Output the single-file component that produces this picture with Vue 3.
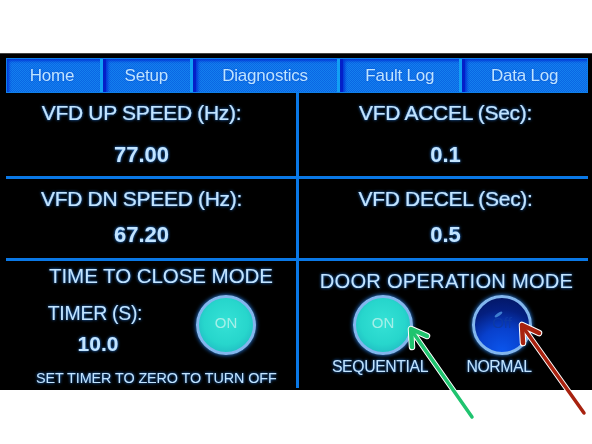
<script setup>
const tabs = [
  { label: 'Home', width: 96 },
  { label: 'Setup', width: 90 },
  { label: 'Diagnostics', width: 148 },
  { label: 'Fault Log', width: 122 },
  { label: 'Data Log', width: 125 }
]

const readings = [
  { label: 'VFD UP SPEED (Hz):', value: '77.00' },
  { label: 'VFD ACCEL (Sec):', value: '0.1' },
  { label: 'VFD DN SPEED (Hz):', value: '67.20' },
  { label: 'VFD DECEL (Sec):', value: '0.5' }
]

const arrows = [
  { color: '#1fc46f', line: '472,417 412,331', head: '427,336 411,329 412,347' },
  { color: '#a8220f', line: '584,413 523,327', head: '539,333 522,325 523,343' }
]
</script>

<template>
  <div class="page">
    <div class="screen">
      <nav class="tabs">
        <div v-for="tab in tabs" :key="tab.label" class="tab" :style="{ width: tab.width + 'px' }">
          {{ tab.label }}
        </div>
      </nav>

      <section class="readings">
        <div v-for="r in readings" :key="r.label" class="reading">
          <div class="reading-label">{{ r.label }}</div>
          <div class="reading-value">{{ r.value }}</div>
        </div>
      </section>

      <section class="modes">
        <div class="mode mode-time">
          <h2>TIME TO CLOSE MODE</h2>
          <div class="timer-row">
            <div class="timer">
              <div class="timer-label">TIMER (S):</div>
              <div class="timer-value">10.0</div>
            </div>
            <div class="lamp on">ON</div>
          </div>
          <p class="hint">SET TIMER TO ZERO TO TURN OFF</p>
        </div>

        <div class="mode mode-door">
          <h2>DOOR OPERATION MODE</h2>
          <div class="door-row">
            <div class="door-option">
              <div class="lamp on">ON</div>
              <span>SEQUENTIAL</span>
            </div>
            <div class="door-option">
              <div class="lamp off"><i class="glint"></i>Off</div>
              <span>NORMAL</span>
            </div>
          </div>
        </div>
      </section>
    </div>

    <svg class="arrows" width="592" height="444" viewBox="0 0 592 444">
      <g v-for="a in arrows" :key="a.color" fill="none" stroke-linecap="round" stroke-linejoin="round">
        <polyline :points="a.line" stroke="#fff" stroke-width="5.5" />
        <polyline :points="a.head" stroke="#fff" stroke-width="6.5" />
        <polyline :points="a.line" :stroke="a.color" stroke-width="3.5" />
        <polyline :points="a.head" :stroke="a.color" stroke-width="4.5" />
      </g>
    </svg>
  </div>
</template>

<style scoped>
.page {
  position: relative;
  width: 592px;
  height: 444px;
  padding-top: 53px;
  box-sizing: border-box;
  background: #fff;
  overflow: hidden;
  font-family: "Liberation Sans", Arial, sans-serif;
  color: #c2e4ff;
}

.screen {
  height: 337px;
  background: #000;
  border-top: 1px solid #444;
  box-sizing: border-box;
  padding: 4px 4px 0 6px;
  display: flex;
  flex-direction: column;
  filter: blur(0.4px);
}

.tabs {
  display: flex;
  height: 35px;
  flex: none;
  border: 1px solid #0f7fe8;
  box-sizing: border-box;
  background: #0a6cf0;
}

.tab {
  display: flex;
  align-items: center;
  justify-content: center;
  box-sizing: border-box;
  padding-right: 3px;
  border-right: 3px solid #12a0f5;
  border-left: 3px solid #0420c8;
  background: repeating-conic-gradient(#0a66e4 0 25%, #1480ee 0 50%) 0 0 / 2px 2px;
  box-shadow: inset 0 4px 3px -2px #0438d8, inset 4px 0 3px -2px #0438d8;
  color: #bde4ff;
  font-size: 17px;
  letter-spacing: -0.2px;
  text-shadow: 0 0 2px #0a4ad0;
}

.tab:first-child {
  border-left: 0;
}

.tab:last-child {
  border-right: 0;
}

.readings {
  display: grid;
  grid-template-columns: 293px 1fr;
  flex: none;
}

.reading {
  height: 86px;
  box-sizing: border-box;
  border-bottom: 3px solid #0a78e6;
  text-align: center;
  text-shadow: 0 0 3px #2a8cff;
}

.reading:nth-child(odd) {
  border-right: 3px solid #0a78e6;
  padding-right: 19px;
}

.reading:nth-child(even) {
  padding-left: 4px;
}

.reading:nth-child(3),
.reading:nth-child(4) {
  height: 82px;
}

.reading-label {
  font-size: 21px;
  -webkit-text-stroke: 0.2px #c2e4ff;
  padding-top: 8px;
  line-height: 24px;
  letter-spacing: -0.3px;
}

.reading-value {
  font-size: 22px;
  font-weight: 700;
  margin-top: 19px;
  line-height: 22px;
}

.reading:nth-child(n + 3) .reading-value {
  margin-top: 13px;
}

.modes {
  display: grid;
  grid-template-columns: 293px 1fr;
  flex: 1;
  min-height: 0;
}

.mode {
  box-sizing: border-box;
  text-shadow: 0 0 3px #2a8cff;
}

.mode-time {
  border-right: 3px solid #0a78e6;
  margin-bottom: 2px;
}

h2 {
  margin: 0;
  font-size: 20.6px;
  font-weight: 400;
  line-height: 24px;
  text-align: center;
  padding-top: 3px;
}

.mode-time h2 {
  padding-left: 20px;
  letter-spacing: -0.1px;
}

.mode-door h2 {
  padding-top: 8px;
  padding-left: 6px;
  font-size: 20.2px;
  letter-spacing: 0.2px;
}

.timer-row {
  display: flex;
  align-items: flex-start;
  padding-left: 40px;
  gap: 52px;
  height: 81px;
}

.timer {
  padding-top: 13px;
  width: 98px;
  text-align: center;
}

.timer-label {
  font-size: 19.5px;
  line-height: 24px;
  letter-spacing: -0.3px;
}

.timer-value {
  font-size: 21px;
  font-weight: 700;
  line-height: 22px;
  margin-top: 8px;
  margin-left: 6px;
}

.timer-row .lamp {
  margin-top: 7px;
}

.hint {
  margin: 0;
  padding-left: 30px;
  font-size: 14.4px;
  line-height: 18px;
  white-space: nowrap;
  letter-spacing: -0.1px;
}

.door-row {
  display: flex;
  padding-left: 35px;
  gap: 21px;
  margin-top: 2px;
}

.door-option {
  display: flex;
  flex-direction: column;
  align-items: center;
  width: 98px;
}

.door-option span {
  font-size: 15.8px;
  line-height: 18px;
  margin-top: 3px;
  padding-right: 6px;
  letter-spacing: -0.4px;
}

.lamp {
  position: relative;
  width: 60px;
  height: 60px;
  flex: none;
  box-sizing: border-box;
  border-radius: 50%;
  border: 3px solid #82b6ee;
  display: flex;
  align-items: center;
  justify-content: center;
  padding-bottom: 5px;
  font-size: 15px;
  text-shadow: none;
}

.lamp.on {
  background: radial-gradient(circle at 50% 45%, #35e2d6 0%, #27d6cc 55%, #1ba9bc 100%);
  color: #a4efe8;
  box-shadow: 0 0 4px #2a8cff;
}

.lamp.off {
  background: radial-gradient(circle at 50% 100%, #0b56ee 0%, #0840cc 40%, #041f80 70%, #03145c 100%);
  color: #0d3aa6;
  box-shadow: 0 0 4px #2a8cff;
}

.glint {
  position: absolute;
  left: 19px;
  top: 15px;
  width: 9px;
  height: 3px;
  background: #3f7ed0;
  border-radius: 50%;
  transform: rotate(-35deg);
}

.arrows {
  position: absolute;
  left: 0;
  top: 0;
}
</style>

<style>
body {
  background: #fff;
}
</style>
